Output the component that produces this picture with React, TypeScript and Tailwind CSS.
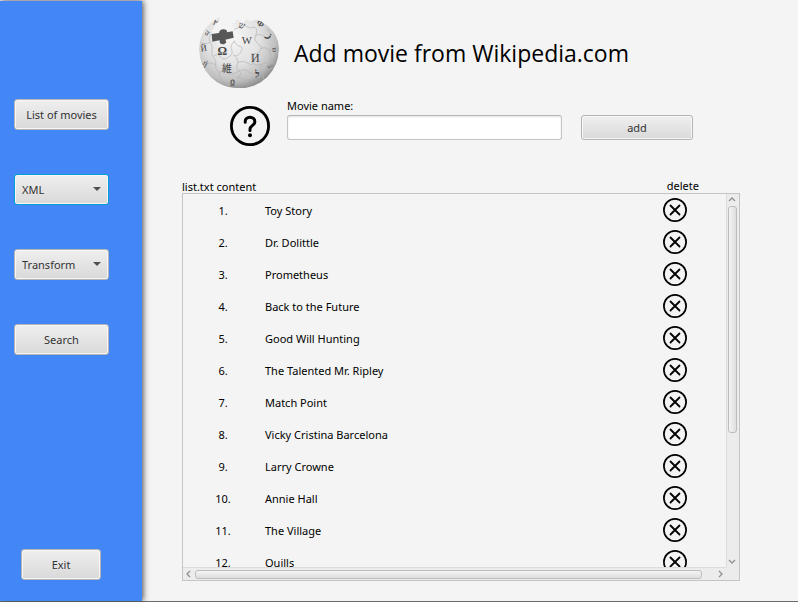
import React from "react";

const movies = [
  "Toy Story",
  "Dr. Dolittle",
  "Prometheus",
  "Back to the Future",
  "Good Will Hunting",
  "The Talented Mr. Ripley",
  "Match Point",
  "Vicky Cristina Barcelona",
  "Larry Crowne",
  "Annie Hall",
  "The Village",
  "Quills",
];

const surface =
  "rounded-[3px] border bg-linear-to-b from-[#efefef] to-[#d9d9d9] text-[#333333] shadow-[inset_0_0_0_1px_#f6f6f6]";

function SideButton({ children, className = "w-[95px]" }: { children: React.ReactNode; className?: string }) {
  return (
    <button type="button" className={`h-[31px] shrink-0 border-[#b5b5b5] text-center ${surface} ${className}`}>
      {children}
    </button>
  );
}

function SideSelect({ label, focused = false }: { label: string; focused?: boolean }) {
  return (
    <div className="relative h-[31px] w-[95px] shrink-0">
      <select
        aria-label={label}
        className={`h-full w-full appearance-none pl-[7px] outline-none ${surface} ${focused ? "border-[#039ed3]" : "border-[#b5b5b5]"}`}
      >
        <option>{label}</option>
      </select>
      <svg className="pointer-events-none absolute top-[13px] right-2 h-1 w-2" viewBox="0 0 8 4" fill="#505050" aria-hidden="true">
        <path d="M0 0H8L4 4Z" />
      </svg>
    </div>
  );
}

function Globe() {
  return (
    <svg className="h-[77px] w-[82px] shrink-0" viewBox="25 36 246 231" role="img" aria-label="Wikipedia">
      <defs>
        <radialGradient id="ball" cx="0.42" cy="0.36" r="0.68">
          <stop offset="0" stopColor="#f6f6f6" />
          <stop offset="0.5" stopColor="#e2e2e2" />
          <stop offset="0.8" stopColor="#bfbfbf" />
          <stop offset="1" stopColor="#828282" />
        </radialGradient>
        <clipPath id="shell">
          <path d="M91 51V59L76 77L66 96L72 126L134 122L132 95L126 68L134 69L142 58L152 66Q165 70 170 58L180 63L204 59Q266 88 268 146Q265 264 148 265Q31 264 28 148Q30 80 91 51Z" />
        </clipPath>
      </defs>
      <g clipPath="url(#shell)">
        <circle cx="148" cy="146" r="120" fill="url(#ball)" />
        <g fill="none" stroke="#b4b4b4" strokeWidth="2">
          <path d="M28 125Q45 137 61 126Q54 111 66 100M61 126Q70 135 67 151T70 169Q86 158 93 171T121 169Q132 159 126 149T134 122" />
          <path d="M134 122Q139 137 151 139T153 157T132 165Q144 172 145 187Q162 180 173 189T191 191Q182 174 186 161Q207 163 213 151T207 132Q190 122 198 106T195 81Q180 88 170 79T145 83L131 90" />
          <path d="M198 106Q216 100 225 110T243 113Q246 98 232 86M212 145Q227 139 238 149T262 151M191 191Q201 200 216 193T239 189Q246 173 238 149M216 193Q207 212 218 224T210 248M145 187Q136 204 148 213T142 232Q161 232 175 247M148 213Q166 205 178 216T218 216M70 169Q82 184 78 194T88 218Q103 208 114 218T148 213M78 194Q57 184 49 193T37 186M88 218Q89 234 98 241T118 258" />
        </g>
        <g fill="#444444" fontFamily="'Liberation Serif', 'Noto Sans CJK JP', serif" textAnchor="middle">
          <text x="98" y="165" fontSize="36" fontWeight="bold">Ω</text>
          <text x="171" y="132" fontSize="32">W</text>
          <text x="197" y="187" fontSize="36">И</text>
          <text x="112" y="217" fontSize="30">維</text>
          <text x="203" y="233" fontSize="30" fontWeight="bold" transform="rotate(6 203 221)">ל</text>
          <text x="129" y="255" fontSize="30">ჲ</text>
          <text x="42" y="153" fontSize="26" transform="rotate(-8 42 143)">Й</text>
          <text x="48" y="198" fontSize="25" transform="rotate(35 48 190)">ή</text>
          <text x="53" y="106" fontSize="22" transform="rotate(35 53 98)">उ</text>
          <text x="76" y="77" fontSize="25" transform="rotate(30 76 70)">۲</text>
          <text x="157" y="85" fontSize="27" transform="rotate(15 157 75)">ש</text>
          <text x="213" y="79" fontSize="25" fontWeight="bold" transform="rotate(35 213 70)">Ф</text>
          <text x="239" y="113" fontSize="28" fontWeight="bold" transform="rotate(35 239 104)">ز</text>
          <text x="254" y="157" fontSize="23" fill="#666666">ಠ</text>
          <text x="242" y="202" fontSize="22" fill="#666666">ம</text>
        </g>
      </g>
      <path d="M91 44V59L76 77L67 93L72 102L130 98L134 90L126 68L134 69L142 57V44Z" fill="#f4f4f4" />
      <path d="M66 102L88 99Q90 87 103 88Q115 90 111 97L129 94L132 113L107 119Q114 128 102 133Q88 134 90 121L68 125Z" fill="#575757" />
    </svg>
  );
}

function HelpIcon() {
  return (
    <svg className="size-10" viewBox="0 0 40 40" fill="none" stroke="#000" strokeLinecap="round" aria-hidden="true">
      <circle cx="20" cy="20" r="18.6" strokeWidth="2.8" />
      <path d="M15.2 16.2v-.8a4.8 4.2 0 0 1 9.6 0v.8c0 2.8-4.8 3.6-4.8 6.8v1.4" strokeWidth="3" />
      <circle cx="20" cy="29.2" r="2" fill="#000" stroke="none" />
    </svg>
  );
}

function DeleteIcon() {
  return (
    <svg className="size-6" viewBox="0 0 24 24" fill="none" stroke="#000" strokeLinecap="round" aria-hidden="true">
      <circle cx="12" cy="12" r="11.1" strokeWidth="1.7" />
      <path d="M7.5 7.5l9 9M16.5 7.5l-9 9" strokeWidth="1.8" />
    </svg>
  );
}

function Chevron({ d }: { d: string }) {
  return (
    <svg className="size-2 shrink-0" viewBox="0 0 8 8" fill="none" stroke="#909090" strokeWidth="1.3" aria-hidden="true">
      <path d={d} />
    </svg>
  );
}

export default function App() {
  return (
    <div className="flex h-screen border-t border-b border-t-[#f4f4f4] border-b-[#6b6b6b] bg-[#f4f4f4] font-['Noto_Sans','Open_Sans',sans-serif] text-[11px] leading-4 text-black">
      <nav className="flex w-[142px] shrink-0 flex-col gap-11 bg-[#4287f5] pt-[98px] pb-[21px] pl-[14px] shadow-[1px_0_6px_#444444]">
        <SideButton>List of movies</SideButton>
        <SideSelect label="XML" focused />
        <SideSelect label="Transform" />
        <SideButton>Search</SideButton>
        <SideButton className="mt-auto ml-[7px] w-20">Exit</SideButton>
      </nav>

      <main className="flex min-w-0 flex-1 flex-col pt-[11px] pr-[58px] pb-5 pl-10">
        <header className="flex items-center gap-[14px] pl-4">
          <Globe />
          <h1 className="pt-1 font-['Open_Sans',sans-serif] text-[23px] leading-8 whitespace-nowrap">
            Add movie from Wikipedia.com
          </h1>
        </header>

        <form className="mt-[9px] flex items-end pl-12" onSubmit={(e) => e.preventDefault()}>
          <button type="button" aria-label="Help" className="-mb-[6px]">
            <HelpIcon />
          </button>
          <div className="ml-[17px] w-[275px]">
            <label htmlFor="movie" className="block">
              Movie name:
            </label>
            <input
              id="movie"
              type="text"
              className="mt-[1px] block h-[25px] w-full rounded-[3px] border border-[#c4c4c4] border-t-[#b5b5b5] bg-white px-2 shadow-[inset_0_1px_2px_#e4e4e4] outline-none"
            />
          </div>
          <button type="submit" className={`ml-[19px] h-[25px] w-28 border-[#b5b5b5] ${surface}`}>
            add
          </button>
        </form>

        <div className="mt-[38px] flex h-[15px] justify-between pr-[41px]">
          <h2 className="pt-px">list.txt content</h2>
          <span>delete</span>
        </div>

        <section className="grid min-h-0 flex-1 grid-cols-[minmax(0,1fr)_13px] grid-rows-[minmax(0,1fr)_13px] border border-[#c4c4c4]">
          <ol className="min-h-0 overflow-hidden">
            {movies.map((movie, i) => (
              <li key={movie} className="flex h-8 items-center pr-[39px]">
                <span className="w-20 pt-0.5 text-center">{i + 1}.</span>
                <span className="flex-1 pt-0.5 pl-0.5">{movie}</span>
                <button type="button" aria-label={`Delete ${movie}`}>
                  <DeleteIcon />
                </button>
              </li>
            ))}
          </ol>
          <div className="flex min-h-0 flex-col items-center border-l border-[#dcdcdc] bg-[#ececec] pt-px pr-[2px] pb-px">
            <Chevron d="M1 6L4 3L7 6" />
            <div className="my-[3px] flex min-h-0 w-full flex-1 flex-col items-center">
              <div className="h-[65%] w-[9px] rounded-[3px] border border-[#bdbdbd] bg-linear-to-r from-[#f4f4f4] to-[#dedede]" />
            </div>
            <Chevron d="M1 2L4 5L7 2" />
          </div>
          <div className="flex items-center border-t border-[#dcdcdc] bg-[#ececec] pr-px pl-[2px]">
            <Chevron d="M5 1L2 4L5 7" />
            <div className="mx-[2px] flex min-w-0 flex-1">
              <div className="h-[9px] w-[97.5%] rounded-[3px] border border-[#bdbdbd] bg-linear-to-b from-[#f4f4f4] to-[#dedede]" />
            </div>
            <Chevron d="M2 1L5 4L2 7" />
          </div>
          <div className="bg-[#ececec]" />
        </section>
      </main>
    </div>
  );
}
